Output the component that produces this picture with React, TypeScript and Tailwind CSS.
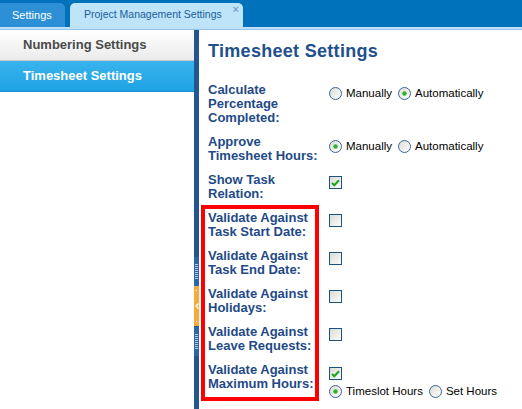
import type { ReactNode } from "react";

const LABEL = "text-[13px] font-bold leading-[14px] text-[#1f4a87]";

function Radio({ checked }: { checked?: boolean }) {
  return (
    <svg width="13" height="13" viewBox="0 0 13 13" className="shrink-0">
      <defs>
        <linearGradient id="rg" x1="0" y1="0" x2="1" y2="1">
          <stop offset="0" stopColor="#dcdcd4" />
          <stop offset="1" stopColor="#ffffff" />
        </linearGradient>
      </defs>
      <circle cx="6.5" cy="6.5" r="6" fill="url(#rg)" stroke="#3b6796" strokeWidth="1" />
      {checked && <circle cx="6.5" cy="6.5" r="2.2" fill="#2fb02f" />}
    </svg>
  );
}

function Check({ checked }: { checked?: boolean }) {
  return (
    <div className="flex h-[13px] w-[13px] shrink-0 items-center justify-center border border-[#1c5180] bg-gradient-to-br from-[#dcdcd6] to-[#fbfbf9]">
      {checked && (
        <svg width="9" height="8" viewBox="0 0 9 8">
          <path d="M1 4 L3.3 6.3 L8 1.3" fill="none" stroke="#21a121" strokeWidth="2" />
        </svg>
      )}
    </div>
  );
}

function Opt({ checked, label }: { checked?: boolean; label: string }) {
  return (
    <span className="flex items-center gap-[4px]">
      <Radio checked={checked} />
      <span>{label}</span>
    </span>
  );
}

function Row({ label, children }: { label: ReactNode; children: ReactNode }) {
  return (
    <div className="flex">
      <div className={`w-[121px] shrink-0 ${LABEL}`}>{label}</div>
      <div className="pt-[3px] text-[11.5px] leading-[14px] text-black">{children}</div>
    </div>
  );
}

function Grip() {
  return (
    <div className="flex h-[29px] items-center justify-center bg-[#2c66a6]">
      <div className="h-[15px] w-[3px] bg-[repeating-linear-gradient(to_bottom,#b4cce8_0px,#b4cce8_1px,transparent_1px,transparent_2px)]" />
    </div>
  );
}

export default function App() {
  return (
    <div className="flex h-[409px] w-[522px] flex-col overflow-hidden bg-white font-['Liberation_Sans',Arial,sans-serif]">
      {/* tab strip */}
      <div className="flex h-[27px] items-end gap-[5px] bg-[#0072bb]">
        <div className="flex h-[24px] w-[65px] items-center rounded-tr-[5px] bg-[#2d8fd6] pl-[12px] text-[11px] text-white">
          Settings
        </div>
        <div className="relative flex h-[24px] w-[173px] items-center rounded-t-[5px] bg-[#bee4fa] pl-[14px] text-[10.5px] text-[#1a5e9a]">
          Project Management Settings
          <span className="absolute right-[4px] top-[1px] text-[11px] font-bold leading-none text-[#7ea3c9]">×</span>
        </div>
      </div>
      <div className="h-[3px] border-b border-[#93c5ec] bg-[#bee0f8]" />

      <div className="flex min-h-0 flex-1">
        <aside className="w-[194px] shrink-0">
          <div className="flex h-[31px] items-center border-b border-[#c9c9c9] bg-gradient-to-b from-white to-[#ebebeb] pl-[23px] text-[13px] font-bold text-[#4a4a4a]">
            Numbering Settings
          </div>
          <div className="flex h-[31px] items-center border-b border-[#168fd0] bg-gradient-to-b from-[#38b3ee] to-[#1ea3e4] pl-[23px] text-[13px] font-bold text-white">
            Timesheet Settings
          </div>
        </aside>

        {/* splitter */}
        <div className="flex w-[5px] shrink-0 flex-col bg-[#23558e]">
          <div className="mt-[227px]">
            <Grip />
            <div className="flex h-[40px] flex-col items-center justify-between bg-[#f8ab3b] py-[4px]">
              <div className="h-[1px] w-[1px] bg-white" />
              <svg width="4" height="6" viewBox="0 0 4 6">
                <path d="M3.5 0.5 L1 3 L3.5 5.5" fill="none" stroke="#ffffff" strokeWidth="1.3" />
              </svg>
              <div className="h-[1px] w-[1px] bg-white" />
            </div>
            <div className="h-[1px]" />
            <Grip />
          </div>
        </div>

        <main className="min-w-0 flex-1 pl-[9px] pt-[10px]">
          <h1 className="text-[18px] font-bold leading-[22px] tracking-[0.3px] text-[#21508c]">Timesheet Settings</h1>

          <div className="mt-[21px] flex flex-col gap-[10px]">
            <Row label={<>Calculate<br />Percentage<br />Completed:</>}>
              <div className="flex items-center gap-[6px]">
                <Opt label="Manually" />
                <Opt checked label="Automatically" />
              </div>
            </Row>
            <Row label={<>Approve<br />Timesheet Hours:</>}>
              <div className="flex items-center gap-[6px] pt-[1px]">
                <Opt checked label="Manually" />
                <Opt label="Automatically" />
              </div>
            </Row>
            <Row label={<>Show Task<br />Relation:</>}>
              <Check checked />
            </Row>

            <div className="relative flex flex-col gap-[10px]">
              {/* annotation frame */}
              <div className="pointer-events-none absolute left-[-7px] top-[-6px] h-[196px] w-[118px] border-4 border-[#ff0000]" />
              <Row label={<>Validate Against<br />Task Start Date:</>}>
                <Check />
              </Row>
              <Row label={<>Validate Against<br />Task End Date:</>}>
                <Check />
              </Row>
              <Row label={<>Validate Against<br />Holidays:</>}>
                <Check />
              </Row>
              <Row label={<>Validate Against<br />Leave Requests:</>}>
                <Check />
              </Row>
              <Row label={<>Validate Against<br />Maximum Hours:</>}>
                <div className="flex flex-col gap-[4px] pt-[1px]">
                  <Check checked />
                  <div className="flex items-center gap-[6px]">
                    <Opt checked label="Timeslot Hours" />
                    <Opt label="Set Hours" />
                  </div>
                </div>
              </Row>
            </div>
          </div>
        </main>
      </div>
    </div>
  );
}
